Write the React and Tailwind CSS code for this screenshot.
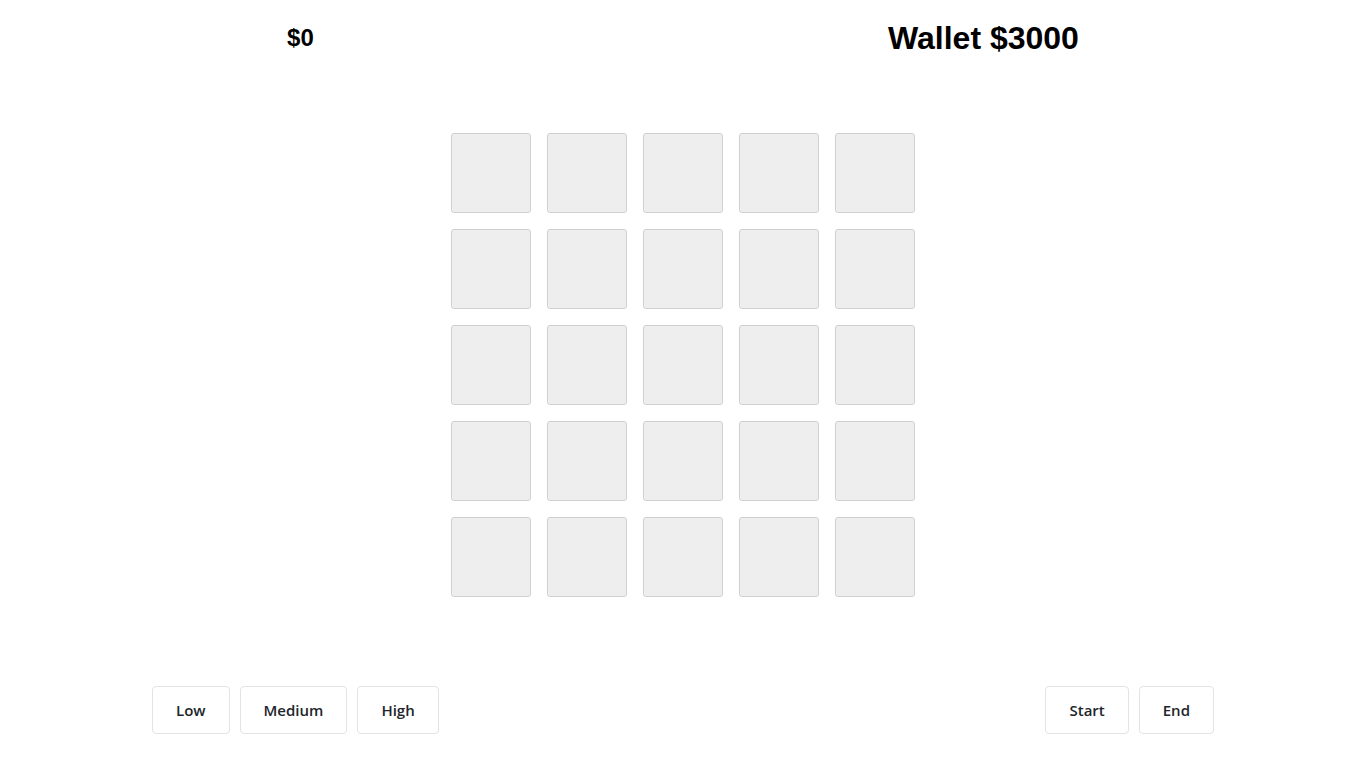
const CELLS = Array.from({ length: 25 }, (_, i) => i)

function Btn({ children }) {
  return (
    <button className="h-12 rounded border border-[#e3e3e3] bg-white px-[23px] text-[15px] font-semibold text-[#212529]">
      {children}
    </button>
  )
}

export default function App() {
  return (
    <div className="min-h-screen bg-white" style={{ fontFamily: 'Arial, "Liberation Sans", sans-serif' }}>
      <header className="flex h-[76px] items-center justify-around text-black">
        <h2 className="text-[24px] font-bold">$0</h2>
        <h1 className="text-[32px] font-bold">Wallet $3000</h1>
      </header>

      <div className="mt-[57px] flex justify-center">
        <div className="grid grid-cols-5 gap-4">
          {CELLS.map((i) => (
            <div
              key={i}
              className="h-20 w-20 rounded-[3px] border border-[#d0d0d0] bg-[#eeeeee]"
            />
          ))}
        </div>
      </div>

      <div
        className="mx-auto mt-[89px] flex w-[1062px] justify-between"
        style={{ fontFamily: '"Segoe UI", "Open Sans", "Noto Sans", sans-serif' }}
      >
        <div className="flex gap-[10px]">
          <Btn>Low</Btn>
          <Btn>Medium</Btn>
          <Btn>High</Btn>
        </div>
        <div className="flex gap-[10px]">
          <Btn>Start</Btn>
          <Btn>End</Btn>
        </div>
      </div>
    </div>
  )
}
